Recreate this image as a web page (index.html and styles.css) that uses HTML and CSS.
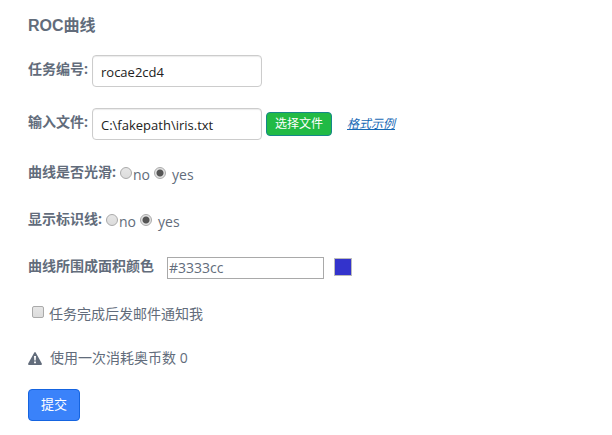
FILE: index.html
```html
<!DOCTYPE html>
<html lang="zh-CN">
<head>
<meta charset="utf-8">
<meta name="viewport" content="width=device-width, initial-scale=1">
<title>ROC曲线</title>
<link rel="stylesheet" href="styles.css">
</head>
<body>
<form class="form">
  <h1 class="title">ROC曲线</h1>

  <div class="row">
    <label class="label" for="task-id">任务编号:</label>
    <input class="input" id="task-id" type="text" value="rocae2cd4">
  </div>

  <div class="row">
    <label class="label" for="file-path">输入文件:</label>
    <input class="input" id="file-path" type="text" value="C:\fakepath\iris.txt">
    <button class="button button-file" type="button">选择文件</button>
    <a class="example" href="#">格式示例</a>
  </div>

  <div class="row row-choice" role="radiogroup" aria-labelledby="smooth-label">
    <span class="label" id="smooth-label">曲线是否光滑:</span>
    <label class="choice"><input class="radio" type="radio" name="smooth" value="no"><span class="choice-text">no</span></label>
    <label class="choice choice-yes"><input class="radio" type="radio" name="smooth" value="yes" checked><span class="choice-text">yes</span></label>
  </div>

  <div class="row row-choice" role="radiogroup" aria-labelledby="line-label">
    <span class="label" id="line-label">显示标识线:</span>
    <label class="choice"><input class="radio" type="radio" name="line" value="no"><span class="choice-text">no</span></label>
    <label class="choice choice-yes"><input class="radio" type="radio" name="line" value="yes" checked><span class="choice-text">yes</span></label>
  </div>

  <div class="row row-choice">
    <label class="label" for="area-color">曲线所围成面积颜色</label>
    <input class="color-text" id="area-color" type="text" value="#3333cc">
    <button class="swatch" type="button" aria-label="选择颜色"></button>
  </div>

  <label class="row row-notify">
    <input class="checkbox" type="checkbox">
    <span>任务完成后发邮件通知我</span>
  </label>

  <div class="row row-cost">
    <svg class="warning" viewBox="0 0 14 13" aria-hidden="true">
      <path fill="currentColor" fill-rule="evenodd" d="M6.3.5Q7 -.4 7.7.5L13.8 11.6Q14.2 12.8 13 13H1Q-.2 12.8.2 11.6ZM6 4 6.3 8.4H7.7L8 4ZM6.1 9.4V11.2H7.9V9.4Z"/>
    </svg>
    <span>使用一次消耗奥币数 0</span>
  </div>

  <button class="button button-submit" type="submit">提交</button>
</form>
</body>
</html>
```
FILE: styles.css
```css
* {
  box-sizing: border-box;
}

body {
  margin: 0;
  background: #fff;
  color: #626c7b;
  font-family: "Open Sans", "Noto Sans CJK SC", sans-serif;
  font-size: 14px;
  line-height: 22px;
}

input,
button {
  margin: 0;
  font-family: inherit;
}

.form {
  display: flex;
  flex-direction: column;
  align-items: flex-start;
  gap: 21px;
  padding: 14px 28px;
}

.title {
  margin: 0 0 -4px;
  font-family: "Liberation Sans", "Noto Sans CJK SC", sans-serif;
  font-size: 16px;
  font-weight: 700;
  line-height: 24px;
}

.row {
  display: flex;
  align-items: center;
}

.row-choice {
  min-height: 26px;
}

.label {
  padding-bottom: 4px;
  font-weight: 700;
  white-space: nowrap;
}

.input {
  width: 170px;
  height: 32px;
  margin-left: 4px;
  padding: 2px 8px 0;
  border: 1px solid #ccc;
  border-radius: 4px;
  box-shadow: inset 0 1px 1px rgba(0, 0, 0, 0.08);
  background: #fff;
  color: #222;
  font-size: 13px;
}

.button {
  padding: 0 8px;
  border: 1px solid;
  border-radius: 4px;
  color: #fff;
  white-space: nowrap;
}

.button-file {
  height: 24px;
  margin-left: 4px;
  border-color: #16878a;
  background: #21ba45;
  font-size: 12px;
  line-height: 22px;
}

.example {
  margin-left: 15px;
  color: #1769b5;
  font-size: 12px;
  font-style: italic;
  white-space: nowrap;
}

.choice {
  display: flex;
  align-items: center;
}

.choice-yes {
  margin-left: 3px;
}

.choice-yes .choice-text {
  margin-left: 5px;
}

.choice-text {
  padding-top: 2px;
}

.radio,
.checkbox {
  flex: none;
  appearance: none;
  width: 12px;
  height: 12px;
  border: 1px solid #aaa;
  background: linear-gradient(#e6e6e6, #dcdcdc);
}

.radio {
  margin: 0 1px 2px;
  border-radius: 50%;
}

.label + .choice {
  margin-left: 3px;
}

.radio:checked {
  background: radial-gradient(circle, #555 0 3px, #e2e2e2 4px);
}

.color-text {
  width: 157px;
  height: 22px;
  margin-left: 13px;
  padding: 0 1px 2px;
  border: 1px solid #a9a9a9;
  background: #fff;
  color: #626c7b;
  font-size: 14px;
}

.swatch {
  width: 18px;
  height: 18px;
  margin: 0 0 3px 10px;
  padding: 0;
  border: 1px solid #bbb;
  background: #33c;
}

.row-notify {
  min-height: 24px;
}

.checkbox {
  margin: 0 5px 4px 4px;
  border-radius: 2px;
}

.warning {
  width: 14px;
  height: 13px;
  margin-right: 8px;
}

.button-submit {
  height: 32px;
  margin-top: -1px;
  padding: 0 12px 4px;
  border-color: #1564e0;
  background: #3a82fa;
  font-size: 13px;
}
```
